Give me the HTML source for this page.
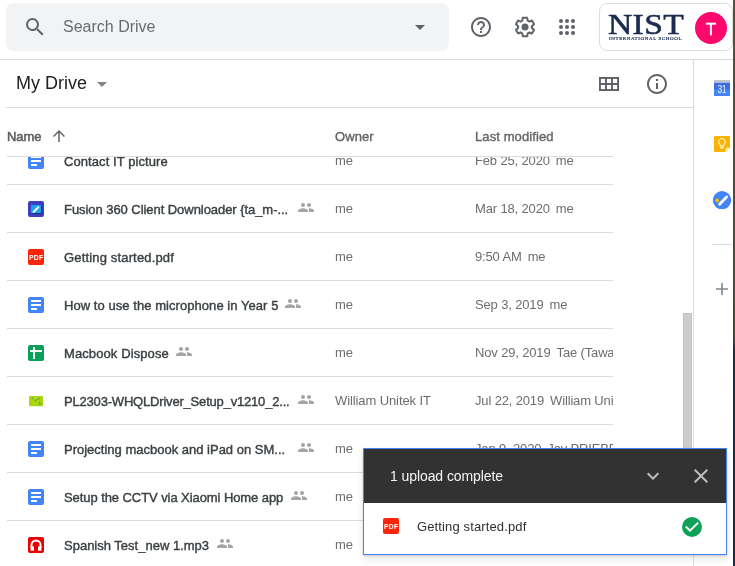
<!DOCTYPE html>
<html><head><meta charset="utf-8">
<style>
*{margin:0;padding:0;box-sizing:border-box}
html,body{width:735px;height:566px;overflow:hidden;background:#fff;-webkit-font-smoothing:antialiased;font-family:"Liberation Sans",sans-serif;position:relative}
.a{position:absolute}
svg{display:block}
.hl{position:absolute;height:1px;background:#dadce0}
.vl{position:absolute;width:1px;background:#dadce0}
.nm{position:absolute;left:64px;font-size:13px;line-height:13px;color:#3c4043;white-space:nowrap;-webkit-text-stroke:0.4px #3c4043}
.ow{position:absolute;left:335px;font-size:13px;line-height:13px;color:#6b6e71;white-space:nowrap;letter-spacing:-0.1px}
.md{position:absolute;left:475px;font-size:13px;line-height:13px;color:#6b6e71;white-space:nowrap;letter-spacing:-0.15px}
.ic{position:absolute;left:28px}
.sh{position:absolute}
.hd{position:absolute;top:130px;font-size:13px;line-height:13px;color:#646769;white-space:nowrap;-webkit-text-stroke:0.4px #646769;letter-spacing:0.1px}
#rows{position:absolute;left:0;top:157px;width:613px;height:409px;overflow:hidden;will-change:transform}
</style></head><body>
<div id="wrap" style="position:absolute;left:0;top:0;width:735px;height:566px;will-change:transform">

<!-- search box -->
<div class="a" style="left:6px;top:3px;width:443px;height:48px;background:#f1f3f4;border-radius:8px"></div>
<svg class="a" style="left:23px;top:15px" width="24" height="24" viewBox="0 0 24 24"><path fill="#5f6368" d="M15.5 14h-.79l-.28-.27A6.47 6.47 0 0 0 16 9.5 6.5 6.5 0 1 0 9.5 16c1.61 0 3.09-.59 4.23-1.57l.27.28v.79l5 4.99L20.49 19l-4.99-5zm-6 0C7.01 14 5 11.990 5 9.5S7.01 5 9.5 5 14 7.01 14 9.5 11.99 14 9.5 14z"/></svg>
<div class="a" style="left:63px;top:19px;font-size:16px;line-height:16px;color:#686c70">Search Drive</div>
<svg class="a" style="left:408px;top:15px" width="24" height="24" viewBox="0 0 24 24"><path fill="#5f6368" d="M7 10l5 5 5-5z"/></svg>

<!-- top icons -->
<svg class="a" style="left:469px;top:15px" width="24" height="24" viewBox="0 0 24 24"><path fill="#5f6368" d="M11 18h2v-2h-2v2zm1-16C6.48 2 2 6.48 2 12s4.48 10 10 10 10-4.48 10-10S17.52 2 12 2zm0 18c-4.41 0-8-3.59-8-8s3.59-8 8-8 8 3.59 8 8-3.59 8-8 8zm0-14c-2.21 0-4 1.79-4 4h2c0-1.1.9-2 2-2s2 .9 2 2c0 2-3 1.75-3 5h2c0-2.25 3-2.5 3-5 0-2.21-1.79-4-4-4z"/></svg>
<svg class="a" style="left:513px;top:15px" width="24" height="24" viewBox="0 0 24 24"><path fill="#5f6368" d="M13.85 22.25h-3.7c-.74 0-1.36-.54-1.45-1.27l-.27-1.89c-.27-.14-.53-.29-.79-.46l-1.8.72c-.7.26-1.47-.03-1.81-.65L2.2 15.530c-.35-.66-.2-1.44.36-1.88l1.53-1.19c-.01-.15-.02-.3-.02-.46 0-.15.01-.31.02-.46l-1.52-1.19c-.59-.45-.74-1.26-.37-1.88l1.85-3.19c.34-.62 1.11-.9 1.79-.63l1.81.73c.26-.17.52-.32.78-.46l.27-1.91c.09-.7.71-1.25 1.44-1.25h3.7c.74 0 1.36.54 1.45 1.27l.27 1.89c.27.14.53.29.79.46l1.8-.72c.71-.26 1.48.03 1.82.65l1.84 3.18c.36.66.2 1.44-.36 1.88l-1.52 1.19c.01.15.02.3.02.46s-.01.31-.02.46l1.52 1.19c.56.45.72 1.23.37 1.86l-1.86 3.22c-.34.62-1.11.9-1.8.63l-1.8-.72c-.26.17-.52.32-.78.46l-.27 1.91c-.1.68-.72 1.22-1.46 1.22zm-3.23-2h2.76l.37-2.55.53-.22c.44-.18.88-.44 1.34-.78l.45-.34 2.38.96 1.38-2.4-2.03-1.58.07-.56c.03-.26.06-.51.06-.78s-.03-.53-.06-.78l-.07-.56 2.03-1.58-1.39-2.4-2.39.96-.45-.35c-.42-.32-.87-.58-1.33-.77l-.52-.22-.37-2.55h-2.76l-.37 2.55-.53.21c-.44.19-.88.44-1.34.79l-.45.33-2.38-.95-1.39 2.39 2.03 1.58-.07.56a7 7 0 0 0-.06.79c0 .26.02.53.06.78l.07.56-2.03 1.58 1.38 2.4 2.39-.96.45.35c.43.33.86.58 1.33.77l.53.22.38 2.55z"/><circle fill="#5f6368" cx="12" cy="12" r="3.5"/></svg>
<svg class="a" style="left:555px;top:15px" width="24" height="24" viewBox="0 0 24 24"><g fill="#5f6368"><circle cx="6" cy="6" r="2"/><circle cx="12" cy="6" r="2"/><circle cx="18" cy="6" r="2"/><circle cx="6" cy="12" r="2"/><circle cx="12" cy="12" r="2"/><circle cx="18" cy="12" r="2"/><circle cx="6" cy="18" r="2"/><circle cx="12" cy="18" r="2"/><circle cx="18" cy="18" r="2"/></g></svg>

<!-- account box -->
<div class="a" style="left:599px;top:3px;width:134px;height:48px;border:1px solid #dadce0;border-radius:8px"></div>
<div class="a" style="left:608px;top:9px;font-family:'Liberation Serif',serif;font-size:30px;line-height:30px;color:#1c2b50;white-space:nowrap;-webkit-text-stroke:0.6px #1c2b50;letter-spacing:0.3px;transform:scaleX(1.12);transform-origin:0 0">NIST</div>
<div class="a" style="left:609px;top:36px;font-family:'Liberation Serif',serif;font-size:5px;line-height:5px;color:#1c2b50;white-space:nowrap;-webkit-text-stroke:0.2px #1c2b50;letter-spacing:0.6px">INTERNATIONAL SCHOOL</div>
<div class="a" style="left:695px;top:12px;width:32px;height:32px;border-radius:50%;background:#fd086d;color:#fff;font-size:17px;text-align:center;line-height:35.5px;-webkit-text-stroke:0.4px #fff">T</div>

<!-- lines -->
<div class="hl" style="left:0;top:59px;width:735px"></div>
<div class="vl" style="left:693px;top:59px;height:507px"></div>
<div class="hl" style="left:6px;top:107px;width:687px"></div>

<!-- My Drive -->
<div class="a" style="left:16px;top:74px;font-size:18px;line-height:18px;color:#202124">My Drive</div>
<svg class="a" style="left:90px;top:72px" width="24" height="24" viewBox="0 0 24 24"><path fill="#80868b" d="M7 10l5 5 5-5z"/></svg>
<svg class="a" style="left:599px;top:77px" width="20" height="14" viewBox="0 0 20 14"><g fill="none" stroke="#5f6368" stroke-width="1.9"><rect x="0.95" y="0.95" width="18.1" height="12.1"/><path d="M6.97 0V14M13.03 0V14M0 7H20"/></g></svg>
<svg class="a" style="left:645px;top:72px" width="24" height="24" viewBox="0 0 24 24"><path fill="#5f6368" d="M11 7h2v2h-2zm0 4h2v6h-2zm1-9C6.48 2 2 6.48 2 12s4.48 10 10 10 10-4.48 10-10S17.52 2 12 2zm0 18c-4.41 0-8-3.59-8-8s3.59-8 8-8 8 3.59 8 8-3.59 8-8 8z"/></svg>

<!-- column header -->
<div class="hd" style="left:7px;color:#595c5f;-webkit-text-stroke:0.5px #595c5f;letter-spacing:-0.05px">Name</div>
<svg class="a" style="left:50px;top:127px" width="18" height="18" viewBox="0 0 24 24"><path fill="#5f6368" d="M4 12l1.41 1.41L11 7.83V20h2V7.83l5.58 5.59L20 12l-8-8-8 8z"/></svg>
<div class="hd" style="left:335px">Owner</div>
<div class="hd" style="left:475px">Last modified</div>
<div class="hl" style="left:7px;top:156px;width:606px"></div>

<div id="rows">
<svg class="ic" style="top:-4px" width="16" height="16" viewBox="0 0 16 16"><rect width="16" height="16" rx="2" fill="#4285f4"/><rect x="3" y="3" width="10" height="2" fill="#fff"/><rect x="3" y="7" width="10" height="2" fill="#fff"/><rect x="3" y="11" width="6" height="2" fill="#fff"/></svg>
<div class="nm" style="top:-2px;letter-spacing:0.08px">Contact IT picture</div>
<div class="ow" style="top:-3px">me</div>
<div class="md" style="top:-3px">Feb 25, 2020<span style="margin-left:6px">me</span></div>
<div class="hl" style="left:7px;top:27px;width:606px"></div>
<svg class="ic" style="top:44px" width="16" height="16" viewBox="0 0 16 16"><rect width="16" height="16" rx="2" fill="#3d3dbd"/><rect x="3" y="4" width="10" height="8" fill="#1ea3f2"/><rect x="3.8" y="12" width="9.2" height="1" fill="#1a2a6a"/><rect x="13" y="5" width="1" height="8" fill="#1a2a6a"/><path d="M5.6 11 L10.4 6.2" stroke="#fff" stroke-width="1.9" stroke-linecap="round"/></svg>
<div class="nm" style="top:46px;letter-spacing:-0.055px">Fusion 360 Client Downloader {ta_m-...</div>
<svg class="sh" style="left:298px;top:46px" width="16" height="9" viewBox="0 0 16 9"><g fill="#a4a5a7"><circle cx="5" cy="2.1" r="2"/><circle cx="11" cy="2.1" r="2"/><path d="M0 9V7.9C0 6.2 3 5.2 5 5.2S10 6.2 10 7.9V9Z"/><path d="M10.9 5.3C13.3 5.3 16 6.3 16 7.9V9H11V7.9C11 7.1 10.9 6 10.9 5.3Z"/></g></svg>
<div class="ow" style="top:45px">me</div>
<div class="md" style="top:45px">Mar 18, 2020<span style="margin-left:6px">me</span></div>
<div class="hl" style="left:7px;top:75px;width:606px"></div>
<svg class="ic" style="top:92px" width="16" height="16" viewBox="0 0 16 16"><rect width="16" height="16" rx="2" fill="#f8250b"/><text x="8.2" y="10.9" font-size="6.8" font-weight="bold" fill="#fff" text-anchor="middle" font-family="Liberation Sans" letter-spacing="0.3">PDF</text></svg>
<div class="nm" style="top:94px;letter-spacing:0.16px">Getting started.pdf</div>
<div class="ow" style="top:93px">me</div>
<div class="md" style="top:93px">9:50 AM<span style="margin-left:6px">me</span></div>
<div class="hl" style="left:7px;top:123px;width:606px"></div>
<svg class="ic" style="top:140px" width="16" height="16" viewBox="0 0 16 16"><rect width="16" height="16" rx="2" fill="#4285f4"/><rect x="3" y="3" width="10" height="2" fill="#fff"/><rect x="3" y="7" width="10" height="2" fill="#fff"/><rect x="3" y="11" width="6" height="2" fill="#fff"/></svg>
<div class="nm" style="top:142px;letter-spacing:0.057px">How to use the microphone in Year 5</div>
<svg class="sh" style="left:285px;top:142px" width="16" height="9" viewBox="0 0 16 9"><g fill="#a4a5a7"><circle cx="5" cy="2.1" r="2"/><circle cx="11" cy="2.1" r="2"/><path d="M0 9V7.9C0 6.2 3 5.2 5 5.2S10 6.2 10 7.9V9Z"/><path d="M10.9 5.3C13.3 5.3 16 6.3 16 7.9V9H11V7.9C11 7.1 10.9 6 10.9 5.3Z"/></g></svg>
<div class="ow" style="top:141px">me</div>
<div class="md" style="top:141px">Sep 3, 2019<span style="margin-left:6px">me</span></div>
<div class="hl" style="left:7px;top:171px;width:606px"></div>
<svg class="ic" style="top:188px" width="16" height="16" viewBox="0 0 16 16"><rect width="16" height="16" rx="2" fill="#0aa05a"/><rect x="2" y="5" width="12" height="2" fill="#fff"/><rect x="5" y="2" width="2" height="12" fill="#fff"/></svg>
<div class="nm" style="top:190px;letter-spacing:0.1px">Macbook Dispose</div>
<svg class="sh" style="left:176px;top:190px" width="16" height="9" viewBox="0 0 16 9"><g fill="#a4a5a7"><circle cx="5" cy="2.1" r="2"/><circle cx="11" cy="2.1" r="2"/><path d="M0 9V7.9C0 6.2 3 5.2 5 5.2S10 6.2 10 7.9V9Z"/><path d="M10.9 5.3C13.3 5.3 16 6.3 16 7.9V9H11V7.9C11 7.1 10.9 6 10.9 5.3Z"/></g></svg>
<div class="ow" style="top:189px">me</div>
<div class="md" style="top:189px">Nov 29, 2019<span style="margin-left:6px">Tae (Tawan)</span></div>
<div class="hl" style="left:7px;top:219px;width:606px"></div>
<svg class="ic" style="top:236px" width="16" height="16" viewBox="0 0 16 16"><rect x="1" y="3" width="14" height="10.3" rx="1.2" fill="#a9d60a"/><g fill="#3aa58c"><circle cx="4.5" cy="5.5" r="0.8"/><circle cx="7.5" cy="7.5" r="0.8"/><circle cx="9.5" cy="6.5" r="0.8"/><circle cx="11.5" cy="5.5" r="0.8"/><circle cx="11.5" cy="9.5" r="0.8"/><circle cx="13.5" cy="10.5" r="0.8"/><circle cx="11.5" cy="11.5" r="0.8"/></g></svg>
<div class="nm" style="top:238px;letter-spacing:-0.19px">PL2303-WHQLDriver_Setup_v1210_2...</div>
<svg class="sh" style="left:298px;top:238px" width="16" height="9" viewBox="0 0 16 9"><g fill="#a4a5a7"><circle cx="5" cy="2.1" r="2"/><circle cx="11" cy="2.1" r="2"/><path d="M0 9V7.9C0 6.2 3 5.2 5 5.2S10 6.2 10 7.9V9Z"/><path d="M10.9 5.3C13.3 5.3 16 6.3 16 7.9V9H11V7.9C11 7.1 10.9 6 10.9 5.3Z"/></g></svg>
<div class="ow" style="top:237px">William Unitek IT</div>
<div class="md" style="top:237px">Jul 22, 2019<span style="margin-left:6px">William Unitek IT</span></div>
<div class="hl" style="left:7px;top:267px;width:606px"></div>
<svg class="ic" style="top:284px" width="16" height="16" viewBox="0 0 16 16"><rect width="16" height="16" rx="2" fill="#4285f4"/><rect x="3" y="3" width="10" height="2" fill="#fff"/><rect x="3" y="7" width="10" height="2" fill="#fff"/><rect x="3" y="11" width="6" height="2" fill="#fff"/></svg>
<div class="nm" style="top:286px;letter-spacing:0px">Projecting macbook and iPad on SM...</div>
<svg class="sh" style="left:298px;top:286px" width="16" height="9" viewBox="0 0 16 9"><g fill="#a4a5a7"><circle cx="5" cy="2.1" r="2"/><circle cx="11" cy="2.1" r="2"/><path d="M0 9V7.9C0 6.2 3 5.2 5 5.2S10 6.2 10 7.9V9Z"/><path d="M10.9 5.3C13.3 5.3 16 6.3 16 7.9V9H11V7.9C11 7.1 10.9 6 10.9 5.3Z"/></g></svg>
<div class="ow" style="top:285px">me</div>
<div class="md" style="top:285px">Jan 9, 2020<span style="margin-left:6px">Jay PRIEBE</span></div>
<div class="hl" style="left:7px;top:315px;width:606px"></div>
<svg class="ic" style="top:332px" width="16" height="16" viewBox="0 0 16 16"><rect width="16" height="16" rx="2" fill="#4285f4"/><rect x="3" y="3" width="10" height="2" fill="#fff"/><rect x="3" y="7" width="10" height="2" fill="#fff"/><rect x="3" y="11" width="6" height="2" fill="#fff"/></svg>
<div class="nm" style="top:334px;letter-spacing:-0.075px">Setup the CCTV via Xiaomi Home app</div>
<svg class="sh" style="left:291px;top:334px" width="16" height="9" viewBox="0 0 16 9"><g fill="#a4a5a7"><circle cx="5" cy="2.1" r="2"/><circle cx="11" cy="2.1" r="2"/><path d="M0 9V7.9C0 6.2 3 5.2 5 5.2S10 6.2 10 7.9V9Z"/><path d="M10.9 5.3C13.3 5.3 16 6.3 16 7.9V9H11V7.9C11 7.1 10.9 6 10.9 5.3Z"/></g></svg>
<div class="ow" style="top:333px">me</div>
<div class="md" style="top:333px">Feb 4, 2020<span style="margin-left:6px">me</span></div>
<div class="hl" style="left:7px;top:363px;width:606px"></div>
<svg class="ic" style="top:380px" width="16" height="16" viewBox="0 0 16 16"><rect width="16" height="16" rx="2" fill="#e80000"/><path d="M3.5 11 V8 a4.5 4.5 0 0 1 9 0 V11" stroke="#fff" stroke-width="2" fill="none"/><rect x="2.6" y="9.4" width="3.4" height="4.3" fill="#fff"/><rect x="10" y="9.4" width="3.4" height="4.3" fill="#fff"/></svg>
<div class="nm" style="top:382px;letter-spacing:0px">Spanish Test_new 1.mp3</div>
<svg class="sh" style="left:217px;top:382px" width="16" height="9" viewBox="0 0 16 9"><g fill="#a4a5a7"><circle cx="5" cy="2.1" r="2"/><circle cx="11" cy="2.1" r="2"/><path d="M0 9V7.9C0 6.2 3 5.2 5 5.2S10 6.2 10 7.9V9Z"/><path d="M10.9 5.3C13.3 5.3 16 6.3 16 7.9V9H11V7.9C11 7.1 10.9 6 10.9 5.3Z"/></g></svg>
<div class="ow" style="top:381px">me</div>
<div class="md" style="top:381px">Jan 17, 2020<span style="margin-left:6px">me</span></div>
</div>

<!-- scrollbar -->
<div class="a" style="left:683px;top:313px;width:9px;height:237px;background:#cdcdcd;border:1px solid #c2c2c2"></div>

<!-- side panel -->
<svg class="a" style="left:714px;top:80px" width="16" height="16" viewBox="0 0 16 16"><rect x="0" y="0" width="16" height="2" fill="#c4c4c4"/><rect x="0" y="2.7" width="16" height="13.3" fill="#4285f4"/><rect x="0" y="2.7" width="16" height="6.3" fill="#3a6fdc"/><text x="8" y="13" font-size="10.5" fill="#fff" text-anchor="middle" font-family="Liberation Sans" textLength="8.6" lengthAdjust="spacingAndGlyphs">31</text></svg>
<svg class="a" style="left:714px;top:136px" width="16" height="16" viewBox="0 0 16 16"><path d="M1 0h14a1 1 0 0 1 1 1v10.5l-4.5 4.5H1a1 1 0 0 1-1-1V1a1 1 0 0 1 1-1z" fill="#f8b400"/><path d="M16 11.5l-4.5 4.5v-3a1.5 1.5 0 0 1 1.5-1.5z" fill="#fde89a"/><path d="M8 2.5a3.2 3.2 0 0 0-1.9 5.8v1.6h3.8V8.3A3.2 3.2 0 0 0 8 2.5z" fill="none" stroke="#fff" stroke-width="1"/><rect x="6.4" y="11" width="3.2" height="1.4" fill="#fff"/></svg>
<svg class="a" style="left:713px;top:191px" width="18" height="18" viewBox="0 0 18 18"><circle cx="9" cy="9.2" r="9.1" fill="#4285f4"/><path d="M6.6 13.2 L13.6 6" stroke="#fff" stroke-width="2.8" stroke-linecap="round"/><circle cx="4.2" cy="9.3" r="1.9" fill="#fbbc04"/></svg>
<div class="hl" style="left:712px;top:244px;width:20px"></div>
<svg class="a" style="left:716px;top:283px" width="12" height="12" viewBox="0 0 12 12"><path d="M6 0V12M0 6H12" stroke="#80868b" stroke-width="1.6"/></svg>

<!-- right dark edge -->
<div class="a" style="left:733px;top:0;width:2px;height:566px;background:linear-gradient(#5a5040 0,#4a4438 340px,#1d2b45 350px,#1b2a44 566px)"></div>

<!-- upload panel -->
<div class="a" style="left:363px;top:448px;width:364px;height:107px;border:1px solid #4285f4;background:#fff;box-shadow:0 1px 2px rgba(0,0,0,0.15),0 4px 8px rgba(0,0,0,0.1)">
  <div class="a" style="left:0;top:0;width:362px;height:54px;background:#323232"></div>
</div>
<div class="a" style="left:390px;top:469px;font-size:14px;line-height:14px;color:#f4f4f4;white-space:nowrap;letter-spacing:-0.08px">1 upload complete</div>
<svg class="a" style="left:641px;top:464px" width="24" height="24" viewBox="0 0 24 24"><path fill="#bdbdbd" d="M7.41 8.59L12 13.17l4.59-4.58L18 10l-6 6-6-6 1.41-1.41z"/></svg>
<svg class="a" style="left:689px;top:464px" width="24" height="24" viewBox="0 0 24 24"><path fill="#bdbdbd" d="M19 6.41L17.59 5 12 10.59 6.41 5 5 6.41 10.590 12 5 17.59 6.41 19 12 13.41 17.59 19 19 17.59 13.41 12z"/></svg>
<svg class="a" style="left:383px;top:518px" width="16" height="16" viewBox="0 0 16 16"><rect width="16" height="16" rx="2" fill="#f8250b"/><text x="8.2" y="10.9" font-size="6.8" font-weight="bold" fill="#fff" text-anchor="middle" font-family="Liberation Sans" letter-spacing="0.3">PDF</text></svg>
<div class="a" style="left:417px;top:520px;font-size:13px;line-height:13px;color:#303134;white-space:nowrap;letter-spacing:0.13px">Getting started.pdf</div>
<svg class="a" style="left:682px;top:517px" width="20" height="20" viewBox="0 0 20 20"><circle cx="10" cy="10" r="10" fill="#0ea158"/><path d="M3.7 9.5 L8 13.6 L16.2 5.6" stroke="#fff" stroke-width="2" fill="none"/></svg>

</div>
</body></html>
